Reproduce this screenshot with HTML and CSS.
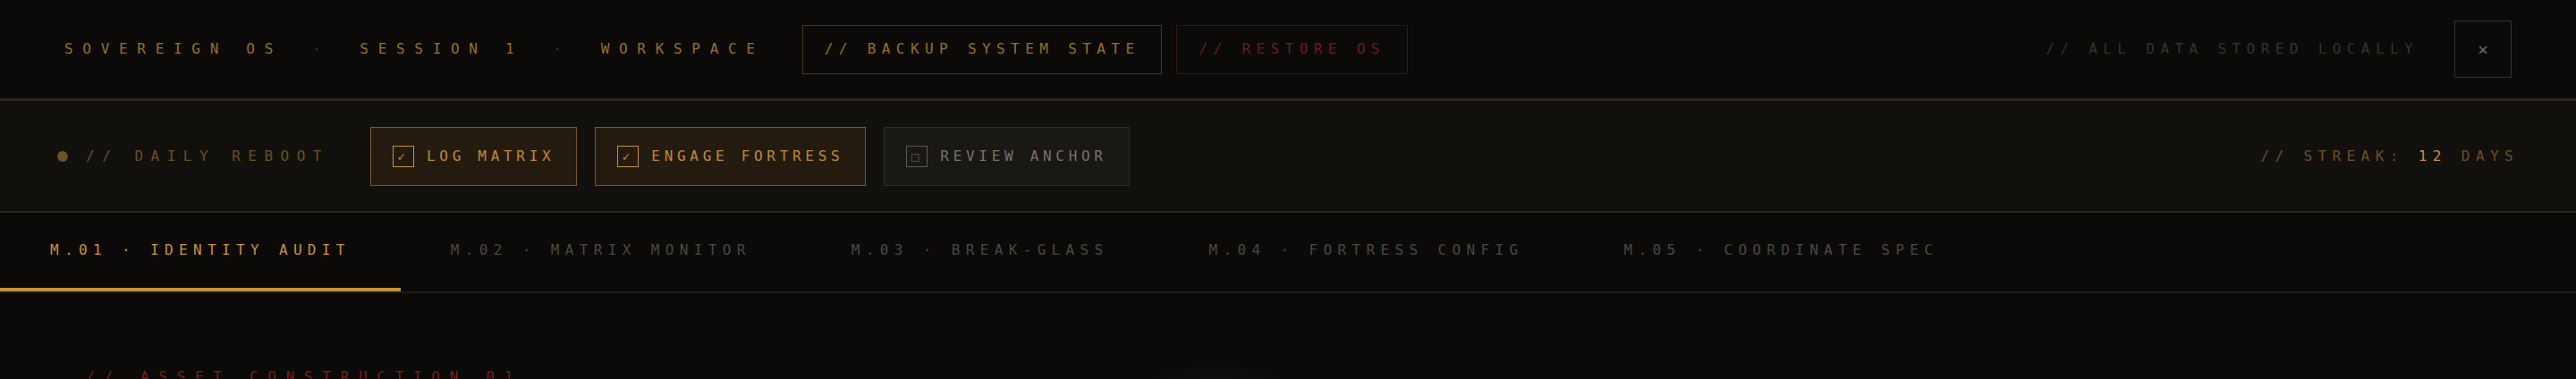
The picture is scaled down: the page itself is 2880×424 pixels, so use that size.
FILE: index.html
```html
<!DOCTYPE html>
<html lang="en">
<head>
<meta charset="utf-8">
<title>Sovereign OS · Workspace</title>
<link rel="stylesheet" href="styles.css">
</head>
<body>
<div class="app">
  <header class="topbar">
    <nav class="crumbs">
      <span class="crumb">SOVEREIGN OS</span>
      <span class="sep">·</span>
      <span class="crumb">SESSION 1</span>
      <span class="sep">·</span>
      <span class="crumb">WORKSPACE</span>
    </nav>
    <div class="actions">
      <button class="btn btn-backup">// BACKUP SYSTEM STATE</button>
      <button class="btn btn-restore">// RESTORE OS</button>
    </div>
    <div class="spacer"></div>
    <span class="local">// ALL DATA STORED LOCALLY</span>
    <button class="close">×</button>
  </header>

  <section class="ritual">
    <div class="ritual-label">
      <span class="pulse"></span>
      <span class="ritual-title">// DAILY REBOOT</span>
    </div>
    <div class="checks">
      <button class="check is-done"><span class="box">✓</span><span>LOG MATRIX</span></button>
      <button class="check is-done"><span class="box">✓</span><span>ENGAGE FORTRESS</span></button>
      <button class="check"><span class="box">□</span><span>REVIEW ANCHOR</span></button>
    </div>
    <div class="spacer"></div>
    <div class="streak">// STREAK: <span class="streak-num">12</span> DAYS</div>
  </section>

  <nav class="tabs">
    <a class="tab is-active">M.01 · IDENTITY AUDIT</a>
    <a class="tab">M.02 · MATRIX MONITOR</a>
    <a class="tab">M.03 · BREAK-GLASS</a>
    <a class="tab">M.04 · FORTRESS CONFIG</a>
    <a class="tab">M.05 · COORDINATE SPEC</a>
  </nav>

  <main class="content">
    <div class="section-kicker">// ASSET CONSTRUCTION 01</div>
  </main>
</div>
</body>
</html>
```

FILE: styles.css
```css
* { box-sizing: border-box; margin: 0; padding: 0; }

html, body {
  background: #0b0a08;
}

body {
  width: 2880px;
  height: 424px;
  overflow: hidden;
  font-family: "DejaVu Sans Mono", "Liberation Mono", monospace;
  font-size: 16px;
  line-height: 24px;
  color: #9a6e2b;
}

button {
  font: inherit;
  background: none;
  border: none;
  color: inherit;
}

.spacer { flex: 1; }

/* ---------- top bar ---------- */
.topbar {
  height: 113px;
  display: flex;
  align-items: center;
  padding: 0 72px;
  border-bottom: 3px solid #2a2419;
  background: #0b0a08;
}

.crumbs {
  display: flex;
  align-items: center;
  gap: 33px;
  letter-spacing: 10.7px;
  color: #9a6e2b;
}

.sep { color: #3a3733; }

.actions {
  display: flex;
  gap: 16px;
  margin-left: 42px;
}

.btn {
  height: 55px;
  padding: 0 24px;
  letter-spacing: 6.4px;
  border: 1px solid #4a3719;
  color: #9a6e2b;
}

.btn-restore {
  border-color: #3a1515;
  color: #6e1b1b;
}

.local {
  letter-spacing: 6.4px;
  color: #35322d;
  margin-right: 40px;
}

.close {
  width: 64px;
  height: 64px;
  border: 1px solid #34322f;
  color: #6b6966;
  font-size: 20px;
  display: flex;
  align-items: center;
  justify-content: center;
}

/* ---------- daily reboot row ---------- */
.ritual {
  height: 125px;
  display: flex;
  align-items: center;
  padding: 0 64px;
  background: #12100c;
  border-bottom: 2px solid #2a2419;
}

.ritual-label {
  display: flex;
  align-items: center;
  gap: 20px;
  margin-right: 46px;
  color: #6b5123;
}

.pulse {
  width: 12px;
  height: 12px;
  border-radius: 50%;
  background: #6b5123;
}

.ritual-title { letter-spacing: 8.5px; }

.checks {
  display: flex;
  gap: 20px;
}

.check {
  height: 66px;
  display: flex;
  align-items: center;
  gap: 14px;
  padding: 0 24px;
  letter-spacing: 4.7px;
  border: 1px solid #2e2c29;
  background: #1a1815;
  color: #77736c;
}

.check .box {
  width: 24px;
  height: 24px;
  border: 1px solid #5a5753;
  display: flex;
  align-items: center;
  justify-content: center;
  font-size: 14px;
  color: #5a5753;
}

.check.is-done {
  border-color: #7a5a23;
  background: #241b10;
  color: #c08a35;
}

.check.is-done .box {
  border-color: #c89033;
  color: #c89033;
}

.streak {
  letter-spacing: 6.4px;
  color: #6b5123;
}

.streak-num { color: #c8903a; }

/* ---------- module tabs ---------- */
.tabs {
  height: 90px;
  display: flex;
  border-bottom: 2px solid #1c1b19;
  background: #0b0a08;
}

.tab {
  height: 88px;
  display: flex;
  align-items: center;
  padding: 0 56px;
  letter-spacing: 6.36px;
  color: #4a4845;
  border-bottom: 4px solid transparent;
}

.tab.is-active {
  color: #c8923a;
  border-bottom-color: #c8923a;
}

/* ---------- content ---------- */
.content {
  height: 96px;
  padding: 82px 96px 0;
  background: radial-gradient(ellipse 110px 40px at 1360px 104px, rgba(255, 255, 255, 0.03), rgba(255, 255, 255, 0) 70%);
}

.section-kicker {
  letter-spacing: 10.7px;
  color: #7a1c1c;
}
```
